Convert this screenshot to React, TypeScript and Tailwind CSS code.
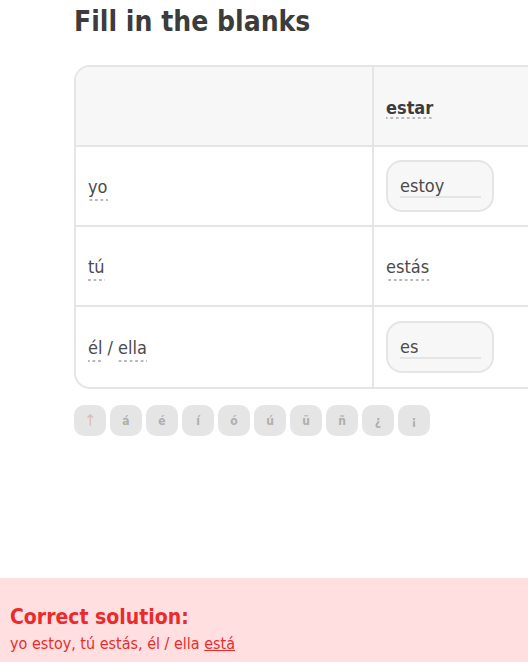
import React from 'react';

const font = { fontFamily: '"DejaVu Sans Condensed", "DejaVu Sans", sans-serif' };

const Word = ({ children }: { children: React.ReactNode }) => (
  <span className="pb-[1px] bg-[linear-gradient(to_right,#b8b8b8_3px,transparent_3px)] bg-[length:5.5px_2px] bg-repeat-x bg-bottom">
    {children}
  </span>
);

const AnswerBox = ({ value }: { value: string }) => (
  <div className="w-[108px] h-[52px] rounded-[16px] border-2 border-[#e5e5e5] bg-[#f7f7f7] flex items-center pl-[12px] pr-[11px]">
    <div className="w-full border-b-2 border-[#e5e5e5] leading-[21px] text-[18px] text-[#4b4b4b]">{value}</div>
  </div>
);

const accents = ['↑', 'á', 'é', 'í', 'ó', 'ú', 'ü', 'ñ', '¿', '¡'];

export default function App() {
  return (
    <div className="w-[528px] h-[662px] bg-white overflow-hidden flex flex-col" style={font}>
      <div className="flex-1 pl-[74px]">
        <h1 className="text-[28px] font-bold text-[#3c3c3c] leading-[40px] mt-[2px]">Fill in the blanks</h1>

        <div className="mt-[23px] w-[600px] rounded-[16px] border-2 border-[#e5e5e5] overflow-hidden">
          <div className="grid grid-cols-[298px_1fr]">
            <div className="h-[80px] bg-[#f7f7f7] border-r-2 border-b-2 border-[#e5e5e5]" />
            <div className="h-[80px] bg-[#f7f7f7] border-b-2 border-[#e5e5e5] flex items-center pl-[12px] pt-[2px]">
              <span className="text-[18px] font-bold text-[#3c3c3c]"><Word>estar</Word></span>
            </div>

            <div className="h-[80px] border-r-2 border-b-2 border-[#e5e5e5] flex items-center pl-[12px] pt-[2px] text-[18px] text-[#4b4b4b]">
              <Word>yo</Word>
            </div>
            <div className="h-[80px] border-b-2 border-[#e5e5e5] flex items-center pl-[12px]">
              <AnswerBox value="estoy" />
            </div>

            <div className="h-[80px] border-r-2 border-b-2 border-[#e5e5e5] flex items-center pl-[12px] pt-[2px] text-[18px] text-[#4b4b4b]">
              <Word>tú</Word>
            </div>
            <div className="h-[80px] border-b-2 border-[#e5e5e5] flex items-center pl-[12px] pt-[2px] text-[18px] text-[#4b4b4b]">
              <Word>estás</Word>
            </div>

            <div className="h-[80px] border-r-2 border-[#e5e5e5] flex items-center pl-[12px] pt-[2px] text-[18px] text-[#4b4b4b] gap-[5px]">
              <Word>él</Word>
              <span className="pb-[1px]">/</span>
              <Word>ella</Word>
            </div>
            <div className="h-[80px] flex items-center pl-[12px]">
              <AnswerBox value="es" />
            </div>
          </div>
        </div>

        <div className="mt-[16px] flex gap-[4px]">
          {accents.map((a) => (
            <button
              key={a}
              className={
                'w-[32px] h-[31px] rounded-[10px] bg-[#e5e5e5] flex items-center justify-center text-[#afafaf] ' +
                (a === '↑' ? 'text-[16px] text-[#d9bfb0]' : 'text-[12px] font-bold')
              }
            >
              {a}
            </button>
          ))}
        </div>
      </div>

      <div className="h-[84px] bg-[#ffdfe0] px-[10px] pt-[26px]">
        <div className="text-[21px] font-bold text-[#ea2b2b] leading-[26px]">Correct solution:</div>
        <div className="text-[16px] text-[#ea2b2b] leading-[22px] mt-[3px]">
          yo estoy, tú estás, él / ella <span className="underline">está</span>
        </div>
      </div>
    </div>
  );
}
